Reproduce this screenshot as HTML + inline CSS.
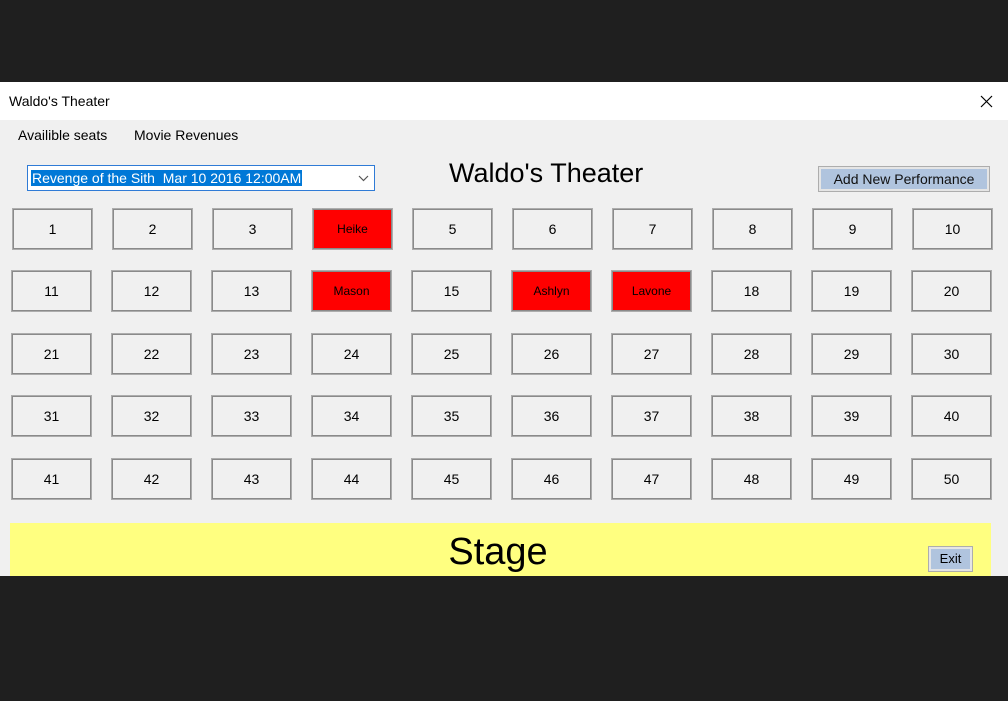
<!DOCTYPE html>
<html><head><style>
*{margin:0;padding:0;box-sizing:border-box}
body{width:1008px;height:701px;background:#1f1f1f;position:relative;overflow:hidden;font-family:"Liberation Sans",sans-serif}
.win{position:absolute;left:0;top:82px;width:1008px;height:494px;background:#f0f0f0}
.tb{position:absolute;left:0;top:0;width:1008px;height:38px;background:#fff;font-size:14px;color:#000}
.tb span{position:absolute;left:9px;top:11px}
.menu{position:absolute;top:45px;font-size:14px;color:#000}
.seat{position:absolute;width:81px;height:42px;border:2px solid #adadad;background:#f0f0f0;display:flex;align-items:center;justify-content:center;font-size:14px;color:#000;outline:1px solid #8a8a8a;outline-offset:-2px}
.red{background:#f00;font-size:12px}
</style></head><body>
<div class="win">
<div class="tb"><span>Waldo's Theater</span>
<svg style="position:absolute;left:980px;top:13px" width="13" height="13"><path d="M1 1L12 12M12 1L1 12" stroke="#000" stroke-width="1.2"/></svg></div>
<div class="menu" style="left:18px">Availible seats</div>
<div class="menu" style="left:134px">Movie Revenues</div>
<div style="position:absolute;left:27px;top:83px;width:348px;height:26px;border:1px solid #2f7bd6;background:#fff">
<span style="position:absolute;left:3px;top:4px;background:#0078d7;color:#fff;font-size:14px;padding:0 1px;line-height:16px">Revenge of the Sith&nbsp; Mar 10 2016 12:00AM</span>
<svg style="position:absolute;left:330px;top:9px" width="11" height="7"><path d="M1 1L5.5 5.5L10 1" stroke="#555" fill="none" stroke-width="1.2"/></svg></div>
<div style="position:absolute;left:449px;top:76px;font-size:27px;color:#000">Waldo's Theater</div>
<div style="position:absolute;left:818px;top:84px;width:172px;height:26px;border:1px solid #adadad;background:#e5e5e5;padding:2px">
<div style="width:100%;height:100%;background:#b0c4de;font-size:14px;text-align:center;line-height:20px;color:#111">Add New Performance</div></div>
<div id="g"></div>
<div style="position:absolute;left:10px;top:441px;width:981px;height:53px;background:#ffff80">
<div style="position:absolute;left:0;width:976px;text-align:center;top:8px;font-size:38px;color:#000">Stage</div>
<div style="position:absolute;left:918px;top:23px;width:45px;height:26px;border:1px solid #adadad;background:#e5e5e5;padding:2px"><div style="height:100%;background:#b0c4de;font-size:13px;text-align:center;line-height:20px">Exit</div></div>
</div>
</div>
<script>
var names={4:"Heike",14:"Mason",16:"Ashlyn",17:"Lavone"};
var ys=[126,188,251,313,376],h="";
for(var r=0;r<5;r++)for(var c=0;c<10;c++){var n=r*10+c+1,x=(r==0?12:11)+c*100;
h+='<div class="seat'+(names[n]?' red':'')+'" style="left:'+x+'px;top:'+ys[r]+'px">'+(names[n]||n)+'</div>';}
document.getElementById('g').innerHTML=h;
</script>
</body></html>
